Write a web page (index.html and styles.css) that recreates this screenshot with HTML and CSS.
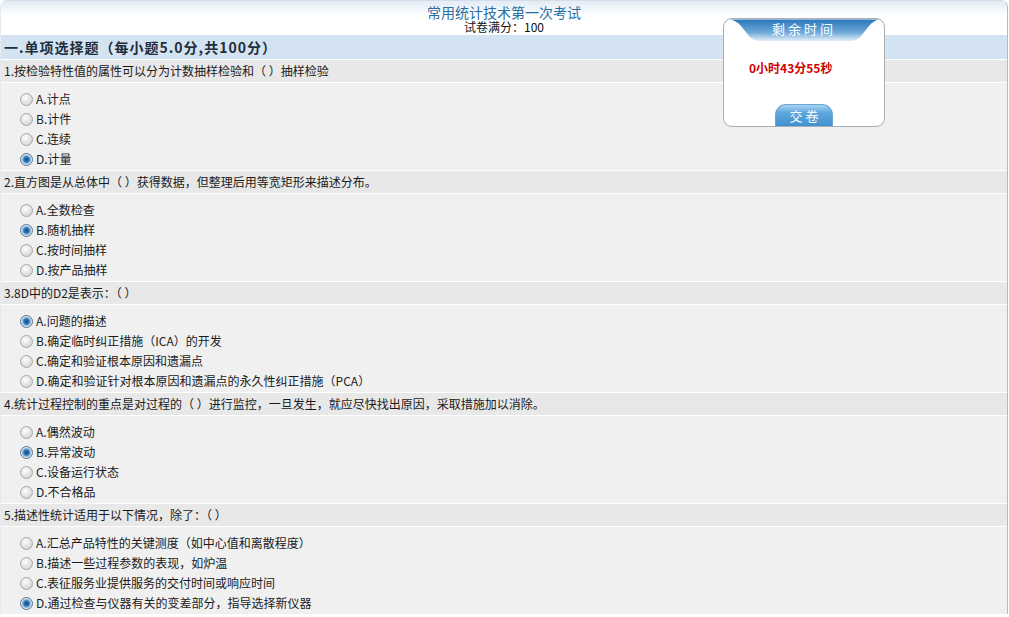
FILE: index.html
```html
<!doctype html>
<html lang="zh-CN">
<head>
  <meta charset="utf-8">
  <title>常用统计技术第一次考试</title>
  <link rel="stylesheet" href="styles.css">
</head>
<body>
  <div class="page">
    <!-- 标题 -->
    <header class="head">
      <h1 class="title">常用统计技术第一次考试</h1>
      <p class="score">试卷满分：100</p>
    </header>

    <h2 class="section">一.单项选择题（每小题5.0分,共100分）</h2>

    <div class="q">
      <p class="q-text">1.按检验特性值的属性可以分为计数抽样检验和（ ）抽样检验</p>
      <ul class="opts">
        <li><label><input type="radio" name="q1">A.计点</label></li>
        <li><label><input type="radio" name="q1">B.计件</label></li>
        <li><label><input type="radio" name="q1">C.连续</label></li>
        <li><label><input type="radio" name="q1" checked>D.计量</label></li>
      </ul>
    </div>

    <div class="q">
      <p class="q-text">2.直方图是从总体中（ ）获得数据，但整理后用等宽矩形来描述分布。</p>
      <ul class="opts">
        <li><label><input type="radio" name="q2">A.全数检查</label></li>
        <li><label><input type="radio" name="q2" checked>B.随机抽样</label></li>
        <li><label><input type="radio" name="q2">C.按时间抽样</label></li>
        <li><label><input type="radio" name="q2">D.按产品抽样</label></li>
      </ul>
    </div>

    <div class="q">
      <p class="q-text">3.8D中的D2是表示：（ ）</p>
      <ul class="opts">
        <li><label><input type="radio" name="q3" checked>A.问题的描述</label></li>
        <li><label><input type="radio" name="q3">B.确定临时纠正措施（ICA）的开发</label></li>
        <li><label><input type="radio" name="q3">C.确定和验证根本原因和遗漏点</label></li>
        <li><label><input type="radio" name="q3">D.确定和验证针对根本原因和遗漏点的永久性纠正措施（PCA）</label></li>
      </ul>
    </div>

    <div class="q">
      <p class="q-text">4.统计过程控制的重点是对过程的（ ）进行监控，一旦发生，就应尽快找出原因，采取措施加以消除。</p>
      <ul class="opts">
        <li><label><input type="radio" name="q4">A.偶然波动</label></li>
        <li><label><input type="radio" name="q4" checked>B.异常波动</label></li>
        <li><label><input type="radio" name="q4">C.设备运行状态</label></li>
        <li><label><input type="radio" name="q4">D.不合格品</label></li>
      </ul>
    </div>

    <div class="q">
      <p class="q-text">5.描述性统计适用于以下情况，除了：（ ）</p>
      <ul class="opts">
        <li><label><input type="radio" name="q5">A.汇总产品特性的关键测度（如中心值和离散程度）</label></li>
        <li><label><input type="radio" name="q5">B.描述一些过程参数的表现，如炉温</label></li>
        <li><label><input type="radio" name="q5">C.表征服务业提供服务的交付时间或响应时间</label></li>
        <li><label><input type="radio" name="q5" checked>D.通过检查与仪器有关的变差部分，指导选择新仪器</label></li>
      </ul>
    </div>

    <!-- 剩余时间浮框 -->
    <aside class="timer">
      <svg class="timer-tab" width="161" height="24" viewBox="0 0 161 24" aria-hidden="true">
        <defs>
          <linearGradient id="tabg" x1="0" y1="0" x2="0" y2="1">
            <stop offset="0" stop-color="#2a77bb"/>
            <stop offset=".6" stop-color="#6fa9d8"/>
            <stop offset="1" stop-color="#e4f0fa"/>
          </linearGradient>
        </defs>
        <path d="M5,0.5 L156,0.5 Q150,1 145,7 L137,17 Q133,22 127,22 L35,22 Q29,22 25,17 L17,7 Q12,1 5,0.5 Z" fill="url(#tabg)"/>
      </svg>
      <span class="timer-title">剩余时间</span>
      <p class="timer-left">0小时43分55秒</p>
      <button class="submit">交卷</button>
    </aside>
  </div>
</body>
</html>
```

FILE: styles.css
```css
/* ---------- base ---------- */
*{box-sizing:border-box}
body{margin:0;background:#fff;overflow:hidden;
     font-family:SimSun,"Noto Sans CJK SC","Noto Sans CJK JP",sans-serif;
     font-size:12px;color:#222}
p,h1,h2,ul{margin:0;padding:0}
ul{list-style:none}

.page{position:relative;width:1008px;
      border-top:1px solid #d5dde8;border-right:1px solid #b9b9b9;
      border-left:1px solid #e6e9ee;border-radius:7px 7px 0 0}

/* ---------- header ---------- */
.head{height:34px;text-align:center;
      background:linear-gradient(#e3ebf5 0,#f4f7fb 9px,#fff 15px);
      border-radius:7px 7px 0 0}
.title{font-size:14px;font-weight:normal;color:#2a6d9f;line-height:13px;padding-top:5px}
.score{line-height:13px;padding-top:1px;color:#111}

/* ---------- section bar ---------- */
.section{height:24px;line-height:24px;padding-left:3px;
         font-size:14px;font-weight:bold;color:#1f2d3a;letter-spacing:1px;
         background:#d4e3f1}

/* ---------- questions ---------- */
.q-text{height:23px;line-height:21px;padding-left:3px;
        border-top:1px solid #fff;background:#e8e8e8;color:#1a1a1a}
.opts{border-top:1px solid #fff;background:#f0f0f0;padding:6px 0 1px 19px}
.opts li{height:20px;line-height:20px}
.opts label{display:inline-flex;align-items:center;gap:2px;color:#1a1a1a}

.opts input{appearance:none;-webkit-appearance:none;margin:0 1px 0 0;
            width:13px;height:13px;border-radius:50%;
            border:1px solid #a4a8ac;
            background:radial-gradient(circle at 40% 35%,#fff 0,#e6e6e6 45%,#c6c9cc 100%)}
.opts input:checked{border-color:#5a7590;
            background:radial-gradient(circle at 50% 50%,#14508a 0,#2c71b0 2.5px,#8fbbe0 4px,#e9eff5 5.5px,#cdd4da 100%)}

/* ---------- timer box ---------- */
.timer{position:absolute;left:722px;top:17px;width:162px;height:109px;
       border:1px solid #a9aeb3;border-radius:9px;background:#fff;overflow:hidden}
.timer-tab{position:absolute;left:0;top:0}
.timer-title{position:absolute;left:0;right:0;top:2px;text-align:center;
             font-size:13px;line-height:16px;letter-spacing:3px;color:#fff}
.timer-left{position:absolute;left:25px;top:41px;line-height:16px;
            font-weight:bold;color:#d00000}
.submit{position:absolute;left:51px;bottom:-1px;width:58px;height:23px;
        border:1px solid #6aa7d6;border-bottom:0;border-radius:11px 11px 0 0;
        background:linear-gradient(#a9d3f0 0,#5ea7de 35%,#3f8fcf 100%);
        color:#fff;font:13px/20px SimSun,"Noto Sans CJK SC",sans-serif;
        letter-spacing:3px;padding:0 0 0 3px;cursor:pointer}
```
